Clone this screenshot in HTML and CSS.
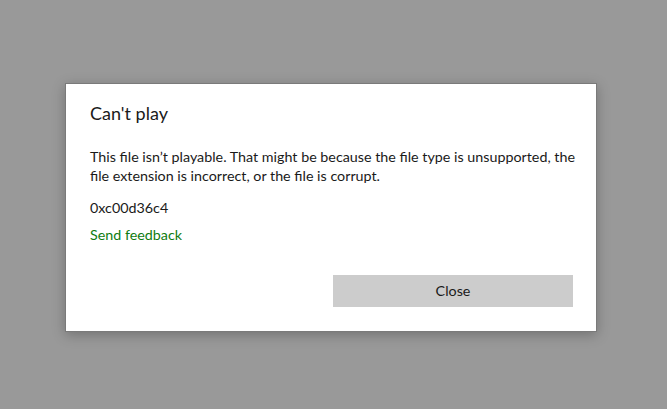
FILE: index.html
```html
<!DOCTYPE html>
<html lang="en">
<head>
    <meta charset="UTF-8">
    <title>Can't play</title>
    <link rel="stylesheet" href="styles.css">
</head>
<body>
    <div class="overlay">
        <div class="dialog">
            <h1 class="dialog-title">Can't play</h1>
            <p class="dialog-text">This file isn’t playable. That might be because the file type is unsupported, the<br>file extension is incorrect, or the file is corrupt.</p>
            <p class="error-code">0xc00d36c4</p>
            <a class="feedback-link" href="#">Send feedback</a>
            <div class="dialog-actions">
                <button class="close-btn">Close</button>
            </div>
        </div>
    </div>
</body>
</html>
```

FILE: styles.css
```css
html, body {
    margin: 0;
    height: 100%;
}

body {
    background: #999999;
    font-family: "Segoe UI", Lato, "Noto Sans", sans-serif;
    color: #1a1a1a;
}

.overlay {
    height: 100%;
    display: flex;
    align-items: flex-start;
    justify-content: center;
    padding-top: 83px;
    padding-right: 5px;
    box-sizing: border-box;
}

.dialog {
    width: 532px;
    height: 249px;
    box-sizing: border-box;
    background: #ffffff;
    border: 1px solid #7a7a7a;
    box-shadow: 0 3px 12px rgba(0, 0, 0, 0.25);
    padding: 16px 23px 24px 24px;
    display: flex;
    flex-direction: column;
}

.dialog-title {
    margin: 0;
    font-size: 18px;
    font-weight: normal;
    line-height: 26px;
}

.dialog-text {
    margin: 21px 0 0;
    font-size: 14.3px;
    line-height: 19px;
    white-space: nowrap;
}

.error-code {
    margin: 13px 0 0;
    font-size: 14.3px;
    line-height: 19px;
}

.feedback-link {
    margin-top: 8px;
    font-size: 14.3px;
    line-height: 19px;
    color: #107c10;
    text-decoration: none;
    align-self: flex-start;
}

.dialog-actions {
    margin-top: auto;
    display: flex;
    justify-content: flex-end;
}

.close-btn {
    width: 240px;
    height: 32px;
    border: none;
    background: #cccccc;
    font-family: inherit;
    font-size: 14.3px;
    color: #1a1a1a;
    padding: 0 0 2px;
}
```
